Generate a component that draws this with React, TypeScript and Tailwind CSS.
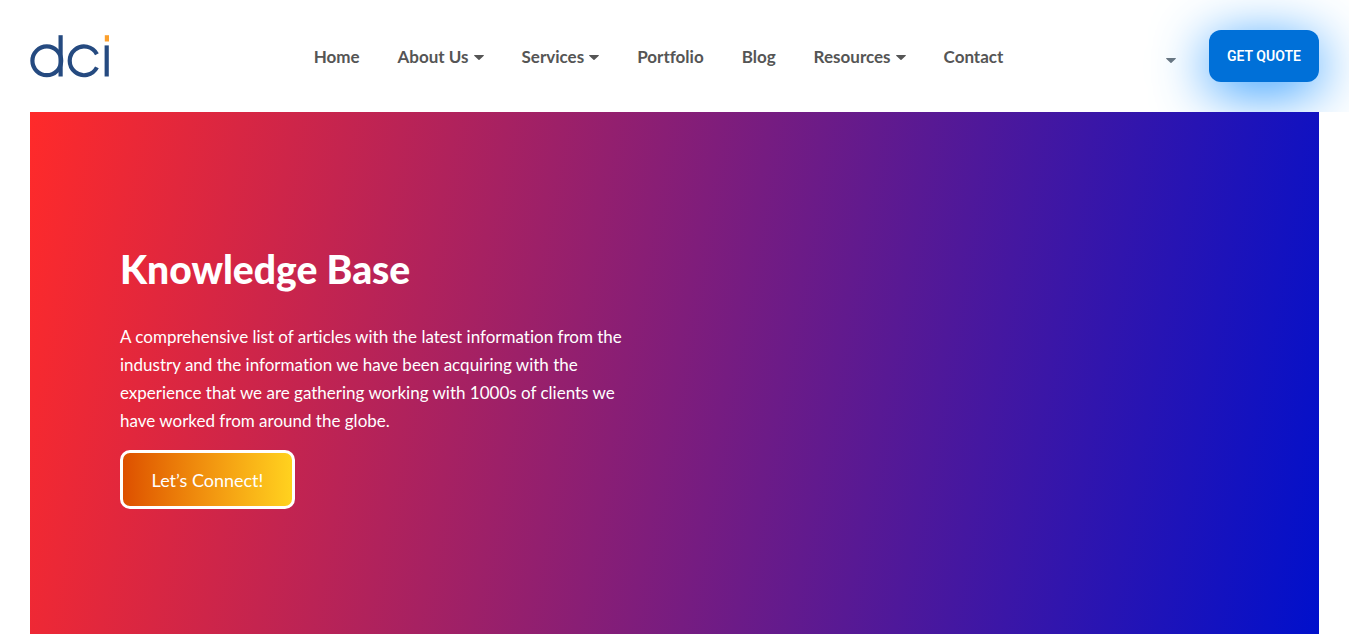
const links = [
  { label: "Home" },
  { label: "About Us", menu: true },
  { label: "Services", menu: true },
  { label: "Portfolio" },
  { label: "Blog" },
  { label: "Resources", menu: true },
  { label: "Contact" },
];

function Caret() {
  return (
    <svg viewBox="0 0 10 5" className="h-[5px] w-[10px] fill-current" aria-hidden="true">
      <path d="M0.6 0h8.8c.5 0 .7.5.4.8L5.5 4.8a.7.7 0 0 1-1 0L.2.8C-.1.5.1 0 .6 0z" />
    </svg>
  );
}

function Logo() {
  return (
    <svg viewBox="0 0 80 43" className="h-[43px] w-20" role="img" aria-label="dci">
      <g fill="none" stroke="#254a80" strokeWidth="4.2">
        <circle cx="16.8" cy="25.8" r="14.4" />
        <path d="M30.6 0.2V41.5" />
        <path d="M66.9 19.2A14.4 14.4 0 1 0 66.9 32.4" />
        <path d="M76.7 10.4V41.5" />
      </g>
      <path fill="#fb9f2c" d="M74.8 0.2h4.2v6.3h-4.2z" />
    </svg>
  );
}

export default function App() {
  return (
    <div className="mr-[17px] bg-white font-['Lato',sans-serif] [font-variant-ligatures:none]">
      <header className="flex h-28 items-center overflow-hidden px-[30px]">
        <a href="#home">
          <Logo />
        </a>
        <nav className="flex flex-1 justify-center gap-[38px] pt-[2px] pl-[41px] text-[17px] leading-7 font-bold text-[#555]">
          {links.map((l) => (
            <a key={l.label} href="#" className="flex items-center gap-[5px] whitespace-nowrap">
              {l.label}
              {l.menu && <Caret />}
            </a>
          ))}
        </nav>
        <button type="button" aria-label="Choose language" className="mr-[33px] pt-2 text-[#6c757d]">
          <Caret />
        </button>
        <button
          type="button"
          className="h-[52px] w-[110px] rounded-xl bg-[#0070d8] font-['Roboto',sans-serif] text-sm font-semibold text-white shadow-[0_10px_55px_#2596ff]"
        >
          GET QUOTE
        </button>
      </header>
      <main className="px-[30px]">
        <section className="bg-[linear-gradient(100deg,#ff2a2a,#0010cc)] px-[90px] py-[125px] text-white">
          <h1 className="text-[39px] leading-[64px] font-black">Knowledge Base</h1>
          <p className="mt-[22px] max-w-[510px] text-[17px] leading-7">
            A comprehensive list of articles with the latest information from the industry and the
            information we have been acquiring with the experience that we are gathering working with
            1000s of clients we have worked from around the globe.
          </p>
          <a
            href="#connect"
            className="mt-[15px] flex h-[59px] w-[175px] items-center justify-center rounded-[10px] border-[3px] border-white bg-linear-to-r from-[#dd4f00] to-[#ffd21f] text-lg"
          >
            Let’s Connect!
          </a>
        </section>
      </main>
    </div>
  );
}
